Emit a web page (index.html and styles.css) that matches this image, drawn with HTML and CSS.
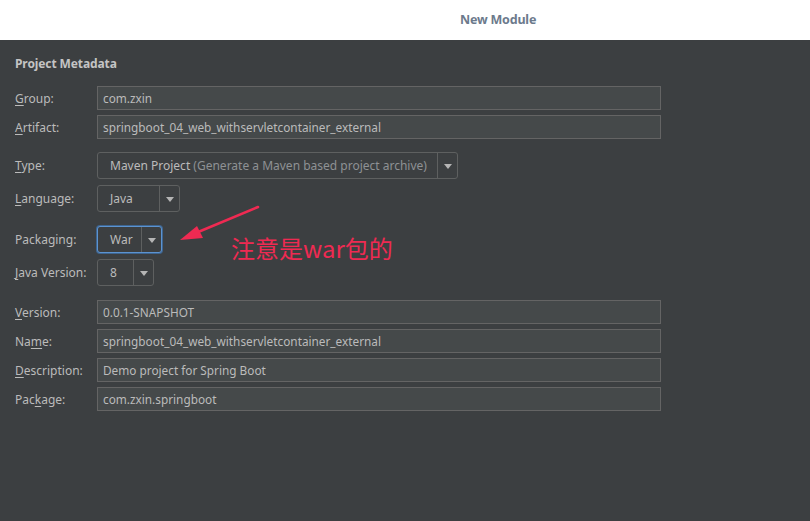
FILE: index.html
```html
<!DOCTYPE html>
<html>
<head>
<meta charset="utf-8">
<link rel="stylesheet" href="styles.css">
</head>
<body>
<div class="titlebar"><span class="title">New Module</span></div>
<div class="content">
  <div class="section">Project Metadata</div>
  <div class="form">
    <div class="row"><label class="lbl"><u>G</u>roup:</label><div class="field">com.zxin</div></div>
    <div class="row"><label class="lbl"><u>A</u>rtifact:</label><div class="field">springboot_04_web_withservletcontainer_external</div></div>
    <div class="row gap-l"><label class="lbl"><u>T</u>ype:</label>
      <div class="combo w-type"><span class="val">Maven Project <span class="hint">(Generate a Maven based project archive)</span></span><span class="btn"><i class="tri"></i></span></div></div>
    <div class="row gap-s"><label class="lbl"><u>L</u>anguage:</label>
      <div class="combo w-lang"><span class="val">Java</span><span class="btn"><i class="tri"></i></span></div></div>
    <div class="row gap-l"><label class="lbl">Packaging:</label>
      <div class="combo focus w-pack"><span class="val">War</span><span class="btn"><i class="tri"></i></span></div></div>
    <div class="row gap-s"><label class="lbl"><u>J</u>ava Version:</label>
      <div class="combo w-java"><span class="val">8</span><span class="btn"><i class="tri"></i></span></div></div>
    <div class="row gap-l"><label class="lbl"><u>V</u>ersion:</label><div class="field">0.0.1-SNAPSHOT</div></div>
    <div class="row"><label class="lbl">Na<u>m</u>e:</label><div class="field">springboot_04_web_withservletcontainer_external</div></div>
    <div class="row"><label class="lbl"><u>D</u>escription:</label><div class="field">Demo project for Spring Boot</div></div>
    <div class="row"><label class="lbl">Pac<u>k</u>age:</label><div class="field">com.zxin.springboot</div></div>
  </div>
</div>
<svg class="arrow" width="90" height="45" viewBox="0 0 90 45">
  <line x1="87" y1="2" x2="20" y2="30" stroke="#ef2a52" stroke-width="2.6" stroke-linecap="round"/>
  <polygon points="9,35 26,21 32,33" fill="#ef2a52"/>
</svg>
<div class="note">注意是war包的</div>
</body>
</html>
```
FILE: styles.css
```css
html, body {
  margin: 0;
  padding: 0;
}
body {
  background: #3c3f41;
  width: 810px;
  height: 521px;
  overflow: hidden;
  position: relative;
  font-family: "Noto Sans", "Open Sans", sans-serif;
  font-size: 12px;
  color: #bbbbbb;
}
.titlebar {
  height: 40px;
  background: #ffffff;
  display: flex;
  align-items: center;
}
.title {
  margin-left: 460px;
  margin-top: -2px;
  font-weight: bold;
  font-size: 12.5px;
  color: #6c7a8c;
  letter-spacing: -0.2px;
}
.content {
  padding: 0 15px;
}
.section {
  margin-top: 16px;
  height: 16px;
  line-height: 16px;
  font-weight: bold;
  color: #c4c4c4;
  font-size: 12px;
  letter-spacing: -0.1px;
}
.form {
  margin-top: 14px;
  display: flex;
  flex-direction: column;
}
.row {
  display: flex;
  align-items: center;
  margin-top: 5px;
}
.row:first-child { margin-top: 0; }
.row.gap-l { margin-top: 13px; }
.row.gap-s { margin-top: 6px; }
.form .row.gap-l:nth-child(5) { margin-top: 14px; }
.form .row.gap-l:nth-child(7) { margin-top: 14px; }
.lbl {
  width: 82px;
  flex: none;
  color: #bbbbbb;
}
.lbl u {
  text-decoration-thickness: 1px;
  text-underline-offset: 2px;
}
.field {
  width: 564px;
  height: 24px;
  box-sizing: border-box;
  border: 1px solid #646464;
  background: #45494a;
  padding-left: 5px;
  line-height: 22px;
  font-size: 11.8px;
  color: #bbbbbb;
  white-space: nowrap;
}
.combo {
  height: 27px;
  box-sizing: border-box;
  border: 1px solid #5e6060;
  border-radius: 3px;
  background: #3c3f41;
  display: flex;
  align-items: stretch;
}
.combo .val {
  flex: 1;
  padding-left: 12px;
  line-height: 25px;
  white-space: nowrap;
  color: #bbbbbb;
}
.combo .hint { color: #8e9194; }
.combo .btn {
  width: 19px;
  border-left: 1px solid #5e6060;
  display: flex;
  align-items: center;
  justify-content: center;
}
.tri {
  width: 0;
  height: 0;
  border-left: 4px solid transparent;
  border-right: 4px solid transparent;
  border-top: 5px solid #b5b5b5;
  margin-top: 1px;
}
.w-type { width: 361px; }
.w-lang { width: 83px; }
.w-pack { width: 65px; }
.w-java { width: 57px; }
.combo.focus {
  border-color: #5c93d0;
  box-shadow: 0 0 0 1px #3e6590;
}
.arrow {
  position: absolute;
  left: 171px;
  top: 205px;
}
.note {
  position: absolute;
  left: 231px;
  top: 233px;
  font-family: "Noto Sans CJK SC", "Noto Sans", sans-serif;
  font-size: 24px;
  line-height: 30px;
  color: #ef2a52;
}
```
